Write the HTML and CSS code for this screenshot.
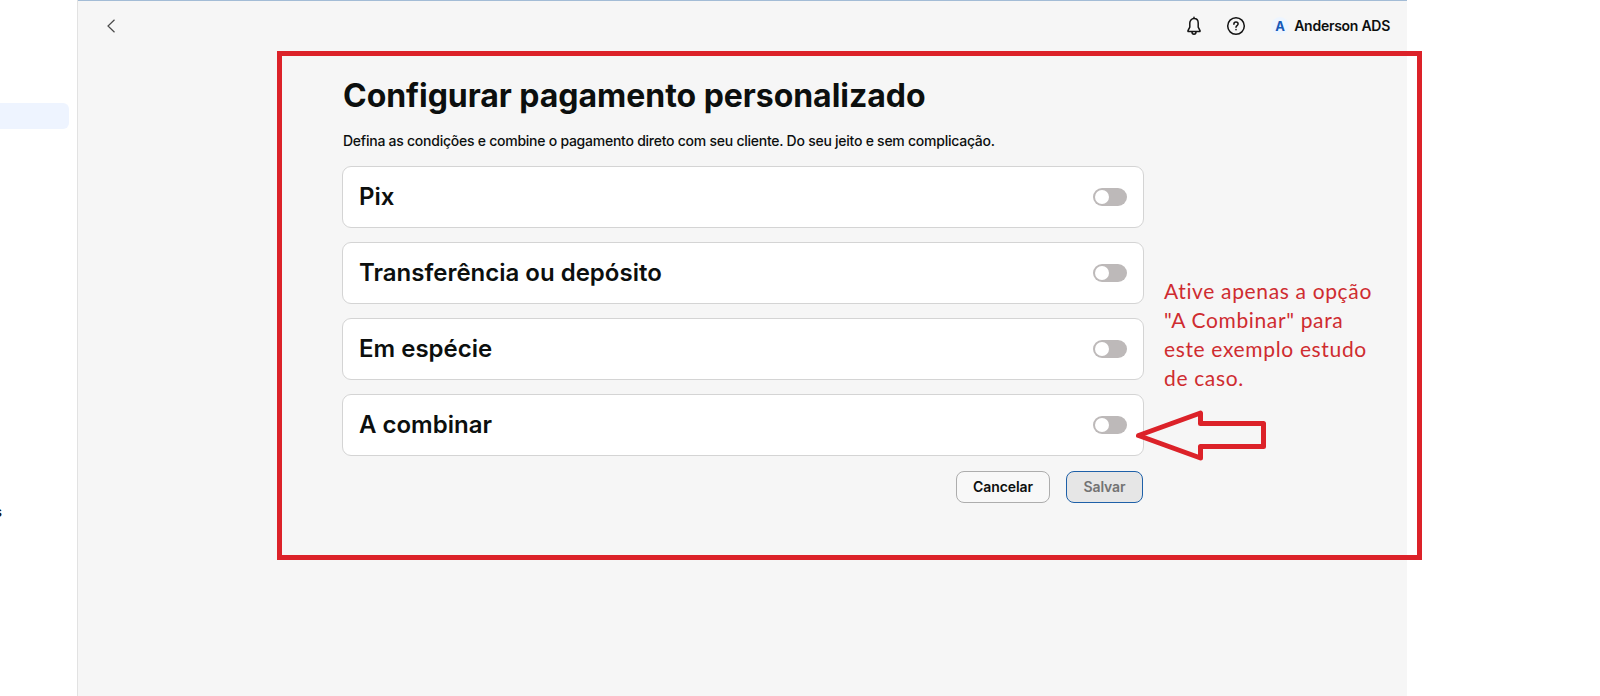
FILE: index.html
```html
<!DOCTYPE html>
<html lang="pt-BR">
<head>
<meta charset="utf-8">
<title>Configurar pagamento personalizado</title>
<link rel="stylesheet" href="styles.css">
</head>
<body>
<div class="app">
  <aside class="sidebar">
    <div class="sidebar-active"></div>
    <div class="sidebar-item"><span>s</span></div>
  </aside>
  <div class="main">
    <header class="topbar">
      <svg class="back" width="9" height="14" viewBox="0 0 9 14" fill="none" stroke="#4a4a4a" stroke-width="1.2"><path d="M7.500 .7 1 7l6.500 6.300"/></svg>
      <div class="account">
        <svg class="bell" width="16" height="20" viewBox="0 0 16 20" fill="none" stroke="#141414" stroke-width="1.5" stroke-linejoin="round" stroke-linecap="round"><path d="M8 2.600c-2.600 0-4.200 2-4.200 4.500v4L2 14.600c-.2.6 0 .9.5.9h11c.5 0 .7-.3.5-.9l-1.800-3.500v-4c0-2.500-1.600-4.500-4.200-4.500zM8 1.200v1.200M5.900 15.800c.1 1.600.9 2.500 2.100 2.500s2-.9 2.100-2.500"/></svg>
        <svg class="help" width="20" height="20" viewBox="0 0 20 20" fill="none" stroke="#141414" stroke-width="1.5" stroke-linecap="round"><circle cx="10" cy="10" r="8.300"/><path d="M7.900 8.200c0-1.300.9-2.100 2.100-2.100s2.100.8 2.100 1.900c0 1.500-2.100 1.600-2.100 3.200"/><path d="M10 13.600v.1"/></svg>
        <span class="avatar">A</span>
        <span class="name">Anderson ADS</span>
      </div>
    </header>
    <main class="content">
      <h1 class="title">Configurar pagamento personalizado</h1>
      <p class="subtitle">Defina as condições e combine o pagamento direto com seu cliente. Do seu jeito e sem complicação.</p>
      <section class="options">
        <div class="card"><h2>Pix</h2><span class="toggle"></span></div>
        <div class="card"><h2>Transferência ou depósito</h2><span class="toggle"></span></div>
        <div class="card"><h2>Em espécie</h2><span class="toggle"></span></div>
        <div class="card"><h2>A combinar</h2><span class="toggle"></span></div>
      </section>
      <div class="actions">
        <button class="btn cancel">Cancelar</button>
        <button class="btn save">Salvar</button>
      </div>
    </main>
  </div>
</div>
<div class="highlight"></div>
<p class="note">Ative apenas a opção<br>"A Combinar" para<br>este exemplo estudo<br>de caso.</p>
<svg class="arrow" width="134" height="56" viewBox="0 0 134 56" fill="none" stroke="#dc2229" stroke-width="5"><path d="M4.500 27.500 66.500 5v10.500h63v23h-63V50z" stroke-linejoin="round"/></svg>
</body>
</html>
```
FILE: styles.css
```css
* { box-sizing: border-box; }
body { margin: 0; background: #fff; color: #0c0f0e; font-family: Inter, "Liberation Sans", sans-serif; overflow: hidden; }
h1, h2, p { margin: 0; }
.app { display: flex; width: 1407px; height: 696px; }
.sidebar { width: 78px; flex: none; border-right: 1px solid #e2e2e2; padding-top: 103px; overflow: hidden; }
.sidebar-active { width: 69px; height: 26px; background: #eef4ff; border-radius: 0 6px 6px 0; }
.sidebar-item { margin-top: 373px; width: 2px; height: 20px; display: flex; justify-content: flex-end; font-size: 14px; line-height: 20px; font-weight: 500; overflow: hidden; }
.main { flex: 1; background: #f6f6f6; border-top: 1px solid #a3bcd6; }
.topbar { height: 50px; display: flex; align-items: center; justify-content: space-between; padding: 0 17px 0 29px; }
.account { display: flex; align-items: center; }
.help { margin-left: 24px; }
.avatar { width: 18px; height: 18px; margin-left: 25px; border-radius: 50%; background: #edf5ff; color: #1659b8; font-size: 13px; line-height: 18px; font-weight: 700; text-align: center; }
.name { margin-left: 5px; font-size: 14px; line-height: 20px; font-weight: 600; letter-spacing: -0.27px; }
.content { width: 802px; margin-left: 264px; padding-top: 25px; }
.title { font-size: 32px; line-height: 40px; font-weight: 650; letter-spacing: -0.04px; padding-left: 1px; white-space: nowrap; }
.subtitle { margin-top: 15px; padding-left: 1px; font-size: 14px; line-height: 20px; font-weight: 480; letter-spacing: -0.25px; white-space: nowrap; }
.options { display: grid; gap: 14px; margin-top: 15px; }
.card { height: 62px; display: flex; align-items: center; justify-content: space-between; background: #fff; border: 1px solid #d4d4d4; border-radius: 9px; padding: 0 16px; }
.card h2 { font-size: 24px; line-height: 32px; font-weight: 620; }
.toggle { width: 34px; height: 18px; border-radius: 9px; background: #bdb9b9; padding: 2px; }
.toggle::before { content: ""; display: block; width: 14px; height: 14px; border-radius: 50%; background: #fff; }
.actions { display: flex; justify-content: flex-end; gap: 16px; margin-top: 15px; padding-right: 1px; }
.btn { height: 32px; padding: 0; border-radius: 8px; font: 600 14px/20px Inter, sans-serif; letter-spacing: -0.1px; }
.cancel { width: 94px; background: #f8f8f8; border: 1px solid #adadad; color: #0c0f0e; }
.save { width: 77px; background: #e6e6e6; border: 1px solid #1e60a8; color: #737373; }
.highlight { position: absolute; left: 277px; top: 51px; width: 1145px; height: 509px; border: 5px solid #dc2229; }
.note { position: absolute; left: 1164px; top: 276px; font: 400 21px/29px Lato, sans-serif; letter-spacing: 0.65px; font-variant-ligatures: none; color: #cf2c30; white-space: nowrap; }
.arrow { position: absolute; left: 1134px; top: 408px; }
```
